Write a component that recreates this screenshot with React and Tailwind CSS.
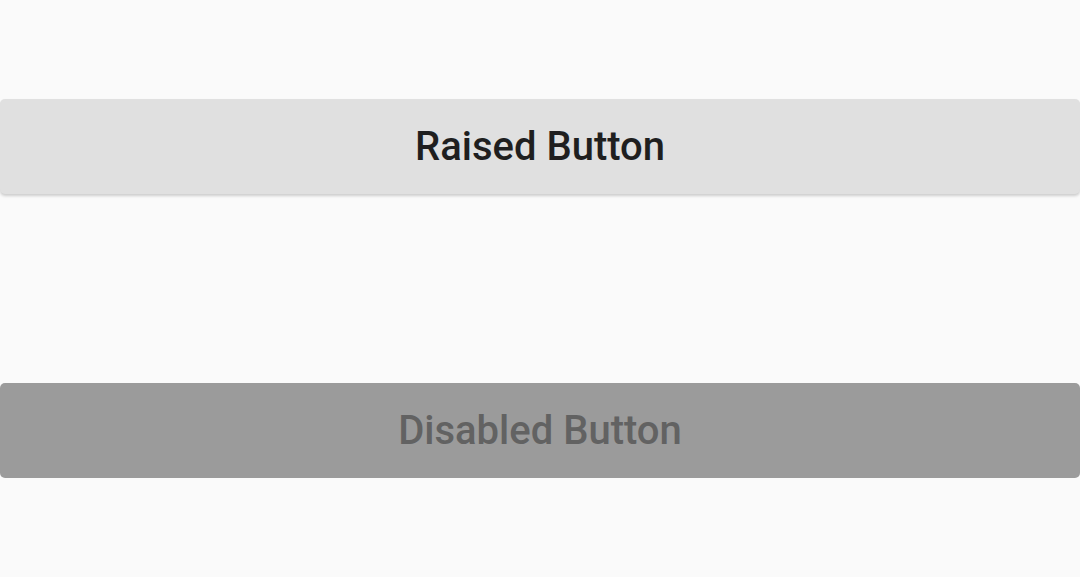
export default function App() {
  return (
    <div className="h-[577px] w-[1080px] bg-[#fafafa] flex flex-col pt-[99px] gap-[189px]" style={{ fontFamily: 'Roboto, sans-serif' }}>
      <button className="h-[95px] w-full rounded-[5px] bg-[#e0e0e0] text-[#1f1f1f] text-[40px] font-medium shadow-[0_2px_3px_rgba(0,0,0,0.18)]">
        Raised Button
      </button>
      <button disabled className="h-[95px] w-full rounded-[5px] bg-[#9b9b9b] text-[#626262] text-[40px] font-medium">
        Disabled Button
      </button>
    </div>
  )
}
